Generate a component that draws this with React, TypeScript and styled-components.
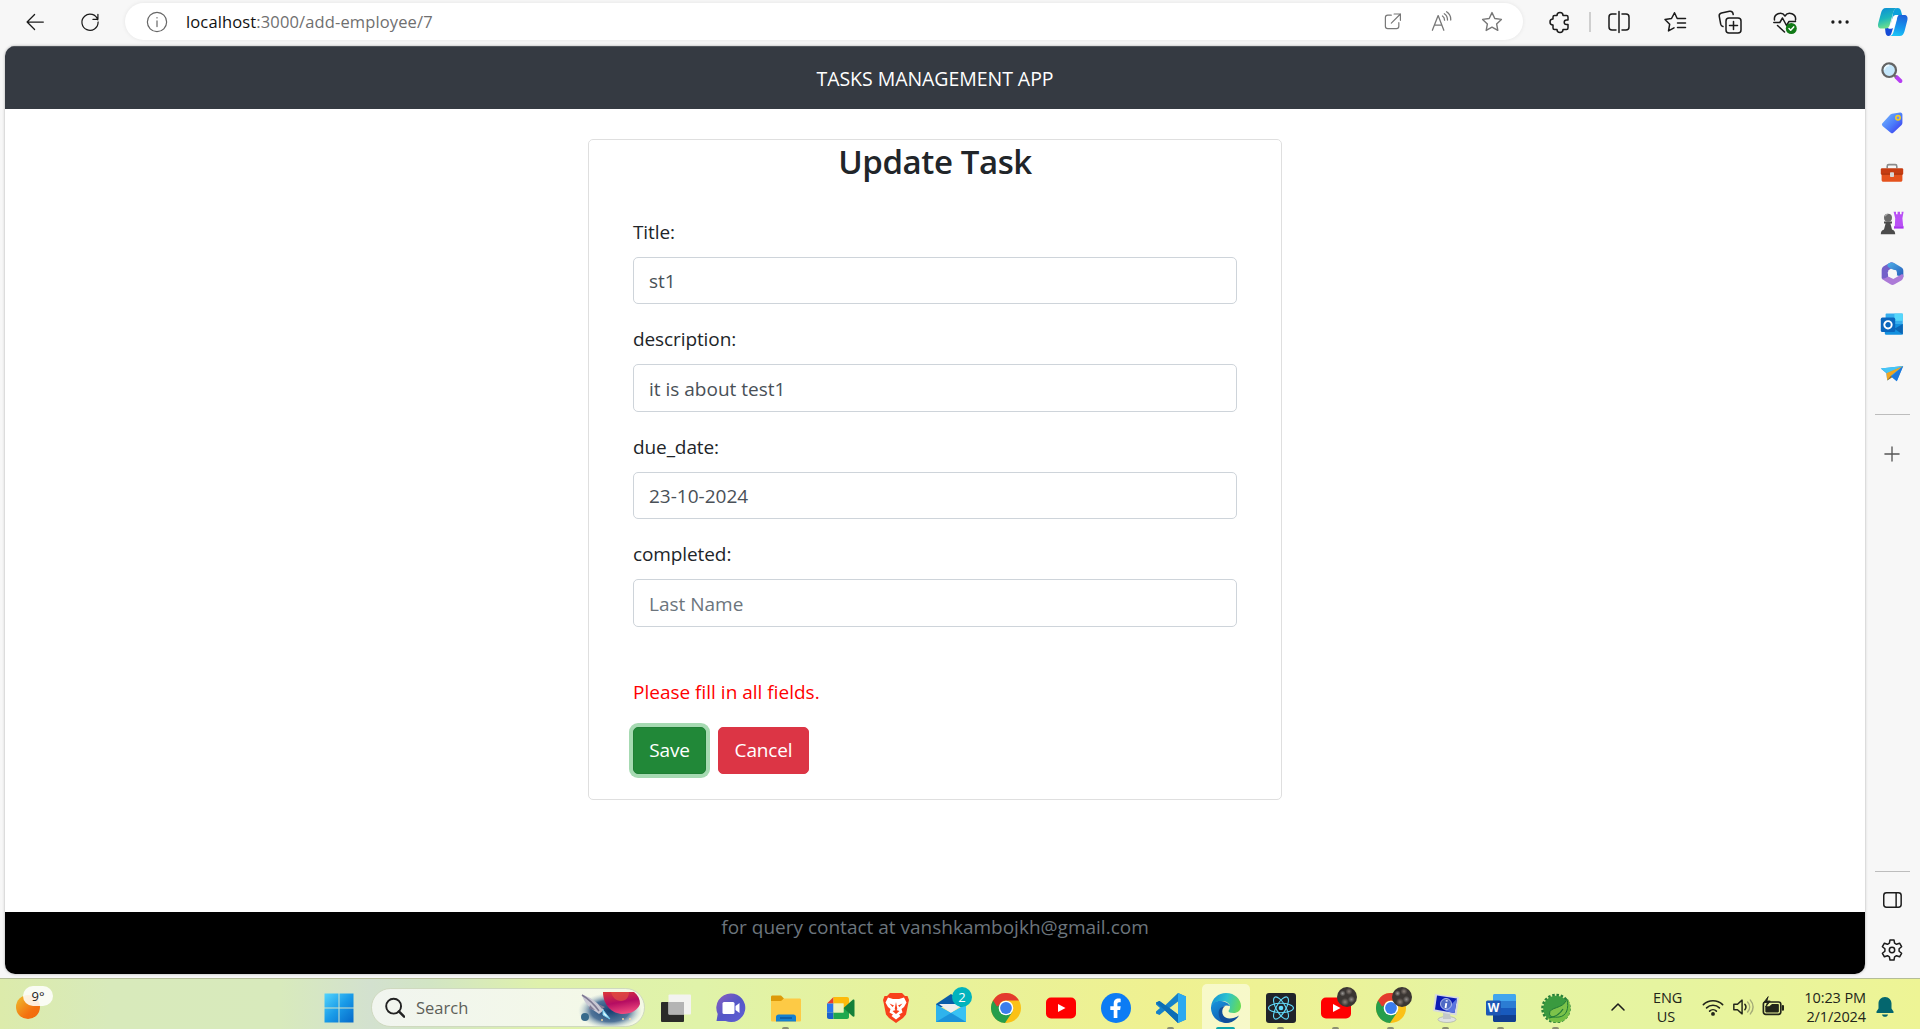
import React from "react";
import styled, { createGlobalStyle, css } from "styled-components";

const GlobalStyle = createGlobalStyle`
  *, *::before, *::after { box-sizing: border-box; }
  html, body { margin: 0; padding: 0; overflow: hidden; }
  body { font-family: "Open Sans", "Noto Sans", sans-serif; background: #f7f7f7; }
`;

/* ---------- shell ---------- */
const Screen = styled.div`
  width: 1920px;
  height: 1029px;
  display: flex;
  flex-direction: column;
  background: #f7f7f7;
  overflow: hidden;
`;
const Browser = styled.div`
  height: 978px;
  display: grid;
  grid-template-columns: 5px 1860px 55px;
  grid-template-rows: 46px 928px 4px;
`;
const Toolbar = styled.header`
  grid-column: 1 / 4;
  display: flex;
  align-items: flex-start;
  padding: 3px 0 0 25px;
`;
const ToolSlot = styled.div<{ $w: number; $pl?: number }>`
  width: ${(p) => p.$w}px;
  height: 37px;
  padding-left: ${(p) => p.$pl ?? 0}px;
  flex: none;
  display: flex;
  align-items: center;
  justify-content: center;
`;
const AddressBar = styled.div`
  width: 1398px;
  height: 37px;
  margin-left: 25px;
  border-radius: 19px;
  background: #fff;
  box-shadow: 0 0 4px rgba(0, 0, 0, 0.08);
  display: flex;
  align-items: center;
  padding: 0 6px 0 21px;
`;
const Url = styled.span`
  margin-left: 18px;
  flex: 1;
  font-size: 16.5px;
  line-height: 24px;
  letter-spacing: 0.13px;
  color: #6f6f6f;
  b { font-weight: 400; color: #111; }
`;
const Divider = styled.i`
  width: 2px;
  height: 20px;
  margin: 9px 0 0 -7px;
  background: #cfcfcf;
`;

/* ---------- page ---------- */
const Page = styled.main`
  grid-column: 2;
  grid-row: 2;
  background: #fff;
  border-radius: 10px;
  overflow: hidden;
  box-shadow: 0 0 3px rgba(0, 0, 0, 0.3);
  display: flex;
  flex-direction: column;
  align-items: center;
`;
const NavBar = styled.div`
  width: 100%;
  height: 63px;
  flex: none;
  background: #353a42;
  border-top: 1px solid #50555b;
  color: #fff;
  display: flex;
  align-items: center;
  justify-content: center;
  font-size: 19.5px;
  letter-spacing: -0.05px;
`;
const Card = styled.section`
  width: 694px;
  height: 661px;
  margin-top: 30px;
  flex: none;
  border: 1px solid #dfdfdf;
  border-radius: 5px;
  padding: 0 44px;
`;
const Heading = styled.h3`
  margin: 0 0 33.5px;
  text-align: center;
  font-size: 33px;
  font-weight: 600;
  line-height: 43px;
  letter-spacing: -0.4px;
  color: #212529;
`;
const Field = styled.div`
  height: 87.5px;
  margin-bottom: 20px;
  display: flex;
  flex-direction: column;
  justify-content: space-between;
`;
const Label = styled.label`
  font-size: 19px;
  line-height: 31px;
  letter-spacing: -0.1px;
  color: #212529;
`;
const Input = styled.input`
  height: 47.5px;
  width: 100%;
  border: 1px solid #ced4da;
  border-radius: 5px;
  padding: 2px 15px 0;
  font: 19px "Open Sans", "Noto Sans", sans-serif;
  letter-spacing: 0;
  color: #495057;
  outline: none;
  &::placeholder { color: #6c757d; opacity: 1; }
`;
const ErrorText = styled.p`
  margin: 50.5px 0 19.5px;
  font-size: 19px;
  line-height: 30px;
  letter-spacing: 0;
  color: #f00;
`;
const Actions = styled.div`
  display: flex;
  gap: 12px;
`;
const Button = styled.button<{ $kind: "save" | "cancel" }>`
  height: 47px;
  width: ${(p) => (p.$kind === "save" ? 73 : 91)}px;
  padding: 0;
  border-radius: 5px;
  font: 19px "Open Sans", "Noto Sans", sans-serif;
  letter-spacing: -0.15px;
  color: #fff;
  ${(p) =>
    p.$kind === "save"
      ? css`
          background: #218838;
          border: 1px solid #1e7e34;
          box-shadow: 0 0 0 4px #a6dab2;
        `
      : css`
          background: #dc3545;
          border: 1px solid #dc3545;
        `}
`;
const PageFooter = styled.footer`
  width: 100%;
  height: 62px;
  margin-top: auto;
  flex: none;
  background: #000;
  color: #6c757d;
  text-align: center;
  font-size: 19px;
  line-height: 31px;
`;

/* ---------- sidebar ---------- */
const SideBar = styled.aside`
  grid-column: 3;
  grid-row: 2 / 4;
  display: flex;
  flex-direction: column;
  align-items: center;
  padding: 2px 1px 0 0;
`;
const SideSlot = styled.div<{ $h?: number }>`
  height: ${(p) => p.$h ?? 50.1}px;
  flex: none;
  display: flex;
  align-items: center;
`;
const Rule = styled.hr`
  width: 35px;
  height: 1px;
  margin: 0;
  border: 0;
  background: #bdbdbd;
`;
const Spacer = styled.div`
  flex: 1;
`;

/* ---------- taskbar ---------- */
const TaskBar = styled.footer`
  height: 51px;
  display: flex;
  border-top: 1px solid #b4bd98;
  background: linear-gradient(90deg, #dcebab 0, #d8eabb 110px, #d8eabc 280px, #d3e1cf 370px, #d2e5c4 430px, #dff1ac 540px, #e0f3a9 700px, #e7f29c 900px, #eff191 1160px, #eef294 1260px, #e5f4a3 1480px, #e6f4a0 1660px, #eef495 1920px);
`;
const Weather = styled.div`
  width: 311px;
  padding: 16px 0 0 16px;
`;
const Sun = styled.div`
  position: relative;
  width: 24px;
  height: 24px;
  border-radius: 50%;
  background: linear-gradient(135deg, #eec02e, #f4700f 65%, #f0680e);
`;
const Degree = styled.span`
  position: absolute;
  left: 7px;
  top: -9px;
  width: 30px;
  height: 20px;
  border-radius: 10px;
  background: rgba(255, 255, 255, 0.86);
  color: #222;
  font-size: 13px;
  line-height: 20px;
  text-align: center;
`;
const SearchBox = styled.div`
  width: 274px;
  height: 39px;
  margin: 9px 3px 0 5px;
  border-radius: 20px;
  border: 1px solid #cfd9c0;
  background: linear-gradient(90deg, #f1f5ef, #f4f9e6);
  display: flex;
  align-items: center;
  padding-left: 12px;
  color: #5d6058;
  font-size: 16.5px;
`;
const SearchText = styled.span`
  margin-left: 11px;
  flex: 1;
`;
const TaskSlot = styled.div<{ $state?: "run" | "active" }>`
  position: relative;
  width: 55px;
  flex: none;
  display: flex;
  align-items: center;
  justify-content: center;
  padding-top: 7px;
  ${(p) =>
    p.$state === "active" &&
    css`
      &::before {
        content: "";
        position: absolute;
        left: 4px;
        top: 5px;
        width: 48px;
        height: 46px;
        border-radius: 5px 5px 0 0;
        background: rgba(255, 255, 245, 0.55);
      }
    `}
  ${(p) =>
    p.$state &&
    css`
      &::after {
        content: "";
        position: absolute;
        bottom: 0;
        left: ${p.$state === "active" ? 18 : 24}px;
        width: ${p.$state === "active" ? 19 : 7}px;
        height: 2px;
        border-radius: 2px 2px 0 0;
        background: ${p.$state === "active" ? "#0ba5ab" : "#8b8f70"};
      }
    `}
  svg { position: relative; display: block; }
`;
const Badge = styled.span`
  position: absolute;
  left: 29px;
  top: 8px;
  width: 20px;
  height: 20px;
  border-radius: 50%;
  background: #02b3bd;
  color: #fff;
  font-size: 13px;
  line-height: 20px;
  text-align: center;
`;
const Avatar = styled.span`
  position: absolute;
  left: 29px;
  top: 8px;
  width: 20px;
  height: 20px;
  border-radius: 50%;
  background: radial-gradient(circle at 28% 32%, #9b9895 0, transparent 3px),
    radial-gradient(circle at 60% 22%, #8a8078 0, transparent 3.5px),
    radial-gradient(circle at 72% 62%, #8e8a88 0, transparent 3.5px),
    radial-gradient(circle at 40% 75%, #8b8077 0, transparent 4px), #3b3633;
`;
const Tray = styled.div`
  display: flex;
  align-items: center;
  padding-top: 6px;
  flex: 1;
  color: #22251a;
`;
const TraySlot = styled.div<{ $w: number; $pl?: number }>`
  width: ${(p) => p.$w}px;
  padding-left: ${(p) => p.$pl ?? 0}px;
  flex: none;
  display: flex;
  gap: 8px;
  justify-content: center;
`;
const TrayText = styled.div<{ $w: number; $right?: boolean }>`
  width: ${(p) => p.$w}px;
  flex: none;
  font-size: 14.5px;
  line-height: 19px;
  padding-bottom: 1px;
  letter-spacing: -0.1px;
  white-space: nowrap;
  text-align: ${(p) => (p.$right ? "right" : "center")};
`;

/* ---------- icons ---------- */
type LineProps = { s?: number; c?: string; w?: number; children: React.ReactNode };
const Line = ({ s = 24, c = "#1b1b1b", w = 1.5, children }: LineProps) => (
  <svg width={s} height={s} viewBox="0 0 24 24" fill="none" stroke={c} strokeWidth={w} strokeLinecap="round" strokeLinejoin="round">
    {children}
  </svg>
);
const starPath = "M12 2.6 14.8 8.5 21.4 9.4 16.6 13.9 17.8 20.4 12 17.2 6.2 20.4 7.4 13.9 2.6 9.4 9.2 8.5Z";

const Art = ({ s = 30, children }: { s?: number; children: React.ReactNode }) => (
  <svg width={s} height={s} viewBox="0 0 30 30">{children}</svg>
);

const Copilot = () => (
  <svg width="32" height="32" viewBox="0 0 32 32">
    <defs>
      <linearGradient id="cpA" x1="0" y1="0" x2="0.3" y2="1"><stop offset="0" stopColor="#0c8bd8" /><stop offset=".55" stopColor="#1bb6bd" /><stop offset="1" stopColor="#6fe08a" /></linearGradient>
      <linearGradient id="cpB" x1="0.6" y1="0" x2="0.4" y2="1"><stop offset="0" stopColor="#1d62da" /><stop offset=".6" stopColor="#1598ee" /><stop offset="1" stopColor="#1bc4f6" /></linearGradient>
    </defs>
    <path d="M22 9h5c3 0 4 2 3.400 5l-2.800 11c-.8 3-2.200 5-5 5H12c3 0 4-2 4.800-5l3-11c.5-3 .9-5 2.200-5z" fill="url(#cpB)" />
    <path d="M8 22h8l-1.500 5c-.6 2-1.500 3-3 3-2 0-2.500-1.400-3-3.500z" fill="#154bd6" />
    <path d="M9 2h12c-3 0-4.200 2-5 5l-3 11c-.8 3-2 4.600-4.300 4.600H4.500c-3 0-4-2-3.300-5L4 7c.8-3 2-5 5-5z" fill="url(#cpA)" />
    <path d="M16 7c.8-3 2-5 4.600-5 2 0 2.900 1.200 3.400 3l1.100 4H20c-2.500 0-3.300 2-4 4l-2 6z" fill="#0ba0dc" />
    <path d="M19.500 9H22c-1.500 0-2 2-2.600 4.500l-1.800 6.300c-.7 2.200-2 2.900-3.600 2.900h-3c1.500-.6 2.100-2.300 2.600-4.200l1.600-5.600C15.900 10.300 17 9 19.500 9z" fill="#fff" />
  </svg>
);

const ChromeLogo = () => (
  <Art>
    <circle cx="15" cy="15" r="15" fill="#fbc116" />
    <path d="M2 7.500A15 15 0 0 0 14 30L21.500 18.700 15 15z" fill="#269e4b" />
    <path d="M2 7.500 8.600 18.700 15 15z" fill="#269e4b" />
    <path d="M2 7.500A15 15 0 0 1 28 7.500H15A7.500 7.500 0 0 0 8 12.500L6 13.500z" fill="#e33b2e" />
    <circle cx="15" cy="15" r="7.300" fill="#fff" />
    <circle cx="15" cy="15" r="5.900" fill="#3b7ded" />
  </Art>
);
const YouTube = () => (
  <Art>
    <rect y="4.500" width="30" height="21" rx="5" fill="#f00" />
    <path d="M12 11v8l7.500-4z" fill="#fff" />
  </Art>
);

const SearchTool = () => (
  <Art s={24}>
    <path d="M20.500 20l5 5" stroke="#b63df2" strokeWidth="5" strokeLinecap="round" />
    <path d="M17 17l3 3" stroke="#777" strokeWidth="3" />
    <circle cx="11.500" cy="11.500" r="8.500" fill="#c5e7fb" stroke="#646464" strokeWidth="2.800" />
    <path d="M5.500 11a6 6 0 0 1 6-5.500" stroke="#eefaff" strokeWidth="2" fill="none" />
  </Art>
);
const Tag = () => (
  <Art s={24}>
    <defs><linearGradient id="tg" x1="0" y1="0" x2="1" y2="1"><stop offset="0" stopColor="#79bdfd" /><stop offset=".55" stopColor="#4a7bfa" /><stop offset="1" stopColor="#3b2bea" /></linearGradient></defs>
    <path d="M15 3.500 25 2a2.500 2.500 0 0 1 3 3v10c0 1-.4 1.700-1 2.400L17 27c-1.300 1.300-2.600 1.300-4 0L3.500 19c-1.500-1.400-1.500-2.700-.2-4L13 4.500z" fill="url(#tg)" />
    <circle cx="22.500" cy="8.500" r="2.700" fill="#6a8aff" stroke="#f5ce22" strokeWidth="2" />
  </Art>
);
const Toolbox = () => (
  <Art s={24}>
    <path d="M9 9V6.500C9 5 10 4.500 11 4.500h8c1 0 2 .5 2 2V9" fill="none" stroke="#8b8b8b" strokeWidth="2" />
    <rect x="1" y="9" width="28" height="8" rx="1.500" fill="#c63c12" />
    <path d="M2 15h26v9c0 1-1 2-2 2H4c-1 0-2-1-2-2z" fill="#e5521d" />
    <path d="M2 15.500h26v1.500H2z" fill="#9c2c0b" />
    <rect x="12.500" y="14" width="5" height="6" rx="1" fill="#d7d7d7" />
  </Art>
);
const Chess = () => (
  <Art s={24}>
    <path d="M17 1h3v3h2V1h3v3h2V1h2.500L28 9l1 10.500H18.500L19 9z" fill="#b950f5" />
    <path d="M17.500 19h12v3h-12z" fill="#a832ee" />
    <circle cx="10" cy="8.500" r="5" fill="#6a6a6a" />
    <path d="M5 13h10v2.500h-2L15 23c3 1 4 3 4 6H1c0-3 1-5 4-6l2-7.500H5z" fill="#4b4b4b" />
    <path d="M6.500 6.500a4 4 0 0 1 3-2.500" stroke="#aaa" strokeWidth="1.500" fill="none" />
  </Art>
);
const M365 = () => (
  <Art s={25}>
    <defs><linearGradient id="ma" x1="0" y1="0" x2="1" y2="1"><stop offset="0" stopColor="#4fb0e8" /><stop offset="1" stopColor="#2459b8" /></linearGradient></defs>
    <path d="M12 2 5 6c-2 1.200-3 3-3 5v9c0 2 2.500 3 4.500 1.500L10 19v-8l9-5c-1-3-4-5.500-7-4z" fill="#7460c9" />
    <path d="M11 2.500c2-1 4-1 6 0l8.500 5C27.300 8.700 28 10 28 12v7.500L20 17v-4l-9-5C8 6.500 8.500 4 11 2.500z" fill="url(#ma)" />
    <path d="M28 18c0 2.500-.8 4.300-2.500 5.300L17.500 28c-1.700 1-3.500 1-5 0l-7-4.200C4 22.800 3 21.500 2.200 20c1.800 1.500 3.300 1.200 5 .2L10 18.500l6 3 9-5c1.700-1 3-.5 3 1.500z" fill="#ac7ad7" />
    <path d="M13 9.800 19.500 11l1 5.500-4.500 4-6-2-.8-5z" fill="#f7f7f7" />
  </Art>
);
const Outlook = () => (
  <Art s={24}>
    <path d="M8 2h19c1 0 1.500.5 1.500 1.500V16H7V3c0-.6.400-1 1-1z" fill="#36aeee" />
    <path d="M18 2h10.500v9H18z" fill="#55d7fb" />
    <path d="M6 15h22.500v12c0 1-.5 1.500-1.500 1.500H8c-1 0-2-.5-2-2z" fill="#1390df" />
    <path d="M28.500 15 18 21l10.500 7z" fill="#0b66b5" />
    <rect x="1" y="7" width="18" height="18" rx="2" fill="#0a66bd" />
    <circle cx="10" cy="16" r="4.600" fill="none" stroke="#fff" strokeWidth="2.400" />
  </Art>
);
const Plane = () => (
  <Art s={24}>
    <path d="M1 8 29 5 21 24 15 19 9 23 8 14z" fill="#2b9ce9" />
    <path d="M1 8 29 5 9 14z" fill="#45c5f6" />
    <path d="M29 5 8 14 9 23l5-6z" fill="#f0a521" />
    <path d="M14 17 9 23l6-4z" fill="#a96b0b" />
    <path d="M29 5 21 24l-7-6z" fill="#1e78dd" />
  </Art>
);

const Rocket = () => (
  <svg width="66" height="36" viewBox="0 0 66 36">
    <defs>
      <radialGradient id="sky"><stop offset="0" stopColor="#143f70" /><stop offset=".6" stopColor="#3e6590" stopOpacity=".9" /><stop offset="1" stopColor="#b4cad4" stopOpacity="0" /></radialGradient>
      <linearGradient id="planet" x1=".2" y1="0" x2=".5" y2="1"><stop offset="0" stopColor="#d8343c" /><stop offset=".5" stopColor="#b50d62" /><stop offset="1" stopColor="#f04b7e" /></linearGradient>
    </defs>
    <ellipse cx="32" cy="21" rx="32" ry="18" fill="url(#sky)" />
    <path d="M25 2h31c4 3 6 7 6 12-2 6-9 10-17 10C34 24 25 15 25 2z" fill="url(#planet)" />
    <path d="M33 2h18c0 5-3 9-8 9s-9-4-10-9z" fill="#e4523f" opacity=".65" />
    <path d="M4 5c7 1 15 7 22 15l-5 4C12 18 6 13 4 5z" fill="#c9c7d3" />
    <path d="M4 5c5 3 12 9 17 16" stroke="#7e7992" strokeWidth="1.500" fill="none" />
    <path d="M12 15l-1 4 6 1zM20 14l7 3-3 2z" fill="#817b96" />
    <path d="M25 20l7 9-7-4z" fill="#d7f5ff" stroke="#74cbee" />
    <circle cx="7" cy="27" r="4" fill="#386a8b" />
    <g fill="#f3d4a0"><circle cx="24" cy="30" r="1" /><circle cx="45" cy="29" r="1" /><circle cx="52" cy="29" r="1" /></g>
  </svg>
);

const Start = () => (
  <Art s={30}>
    <defs><linearGradient id="win" x1="0" y1="0" x2="1" y2="1"><stop offset="0" stopColor="#52d4fd" /><stop offset=".5" stopColor="#199be8" /><stop offset="1" stopColor="#0669c9" /></linearGradient></defs>
    <path d="M.5.500h14v14H.500zM15.500.500h14v14h-14zM.500 15.500h14v14H.500zM15.500 15.500h14v14h-14z" fill="url(#win)" />
  </Art>
);
const TaskView = () => (
  <Art>
    <rect x="0" y="9" width="23" height="20" rx="1" fill="#2b2b29" />
    <rect x="7.500" y="1.500" width="22.500" height="20" rx="1" fill="#f3f3f0" />
    <path d="M7.500 9H23v12.500H7.500z" fill="#b4b4b4" />
  </Art>
);
const Chat = () => (
  <Art>
    <defs><linearGradient id="ch" x1="0" y1="0" x2="1" y2="1"><stop offset="0" stopColor="#8c5fc0" /><stop offset=".5" stopColor="#5457c7" /><stop offset="1" stopColor="#615ed5" /></linearGradient></defs>
    <path d="M15 .500a14.300 14.300 0 1 1-5.500 27.500H.500l1.200-7A14.300 14.300 0 0 1 15 .500z" fill="url(#ch)" />
    <rect x="6.500" y="9" width="12" height="12" rx="1.500" fill="#fff" />
    <path d="M19.500 13 23.500 10v10l-4-3z" fill="#fff" />
  </Art>
);
const Folder = () => (
  <Art>
    <path d="M0 4c0-1 .5-1.500 1.500-1.500H10l3 3-3 4H0z" fill="#dd9a09" />
    <path d="M0 8h10l3-2.500h15.500c1 0 1.500.5 1.500 1.500v20c0 1-.5 1.500-1.500 1.500h-27C.5 28.500 0 28 0 27z" fill="#fdca45" />
    <path d="M5 28.500V24c0-1.500 1-2.500 2.500-2.500h15c1.500 0 2.500 1 2.500 2.500v4.500z" fill="#1480d0" />
    <path d="M9 25h12" stroke="#0c57a0" strokeWidth="1.600" />
  </Art>
);
const Meet = () => (
  <Art>
    <path d="M1 10.500 7.500 4v6.500z" fill="#e63c30" />
    <path d="M7.500 4H21c1.200 0 2 .8 2 2v9h-5.500v-4.500h-10z" fill="#fdba0b" />
    <path d="M1 10.500h6.500v9H1z" fill="#2b75ec" />
    <path d="M1 19.500h6.500V26H3c-1.200 0-2-.8-2-2z" fill="#1a62cb" />
    <path d="M7.500 19.500h10V15H23v9c0 1.200-.8 2-2 2H7.500z" fill="#20a84e" />
    <path d="M17.500 15 26.500 7c1-.8 2-.5 2 .8v14.700c0 1.300-1 1.600-2 .8z" fill="#138039" />
    <path d="M7.500 10.500h10v9h-10z" fill="#eef3bd" />
  </Art>
);
const Brave = () => (
  <Art>
    <path d="M9 0h12l3 3h2.500L28 7l-.7 3L25 21.500 22 25l-7 5-7-5-3-3.500L2.700 10 2 7l1.500-4H6z" fill="#f8401c" />
    <path d="M7 4.500 12 6h6l5-1.500 2.500 5L23 14l-2.500 2 1 3.500-3.500 2 1.500 1.500L15 26.500 10.500 23l1.500-1.500-3.500-2 1-3.500L7 14 4.500 9.500z" fill="#fff" />
    <path d="M8.500 10.500 13 12.500l-1.500 1.500zM21.500 10.500 17 12.500l1.500 1.500zM15 9l1.300 7-1.300 2-1.300-2zM11.500 18l3.500-1 3.500 1-3.500 3z" fill="#f8401c" />
  </Art>
);
const Mail = () => (
  <Art>
    <path d="M0 11 15 1l15 10v3H0z" fill="#0a5da9" />
    <path d="M3 11h24L15 20z" fill="#efefef" />
    <path d="M0 11.500 15 20l15-8.500V29H0z" fill="#2ba9e5" />
    <path d="M0 11.500 30 29H0z" fill="#2fb3ec" />
    <path d="M15 20 30 11.500V29z" fill="#38c2f4" />
    <path d="M0 29 15 20l15 9z" fill="#1b93da" />
  </Art>
);
const Facebook = () => (
  <Art>
    <circle cx="15" cy="15" r="15" fill="#0c7cf4" />
    <path d="M12.700 25v-8H9.300v-3.800h3.400v-2.400c0-3.800 1.900-5.300 4.800-5.300.9 0 1.500.1 2.200.2v3.500h-1.500c-1.300 0-1.800.7-1.800 1.900v2.100h3.300l-.6 3.800h-2.700v8z" fill="#fff" />
  </Art>
);
const VSCode = () => (
  <Art>
    <path d="M22 0 30 3.500v23L22 30 9 17.500 3.500 22 0 20.500v-2L4 15 0 11.500v-2L3.500 8 9 12.500z" fill="#1581c9" />
    <path d="M22 0 30 3.500v23L22 30z" fill="#2ba9f0" />
    <path d="M22 8.500v13L13.500 15z" fill="#eef192" />
    <path d="M0 9.500 3.500 8 13.500 15 22 21.500V30L9 17.500z" fill="#0c6eb5" />
  </Art>
);
const Edge = () => (
  <Art>
    <defs>
      <linearGradient id="ea" x1="0" y1=".3" x2="1" y2=".5"><stop offset="0" stopColor="#1593d5" /><stop offset=".5" stopColor="#2cc3cf" /><stop offset="1" stopColor="#67db54" /></linearGradient>
      <linearGradient id="eb" x1="0" y1="0" x2=".5" y2="1"><stop offset="0" stopColor="#1795dd" /><stop offset="1" stopColor="#1060b3" /></linearGradient>
    </defs>
    <path d="M0 14C1 5 7.500 0 15 0c9 0 15 6.500 15 13 0 4.500-3.500 7-7.500 7-3.500 0-5-1-5-2 0-.8 1.500-1.500 1.500-4C19 11 16 8 11 8 5 8 1 11 0 14z" fill="url(#ea)" />
    <path d="M0 14C1 10 5 7.500 10 8c4.500.3 8 3 9 5-6-2-10 1.500-10 6 0 5.500 4 9.500 10 10.300A15 15 0 0 1 0 14z" fill="url(#eb)" />
    <path d="M14 13c-5 4-3 12.500 4.500 12.500 4 0 7-1.500 9.500-3C25.500 27 20.500 30 15 30 8 29.500 6 19 9 15.500 10.500 14 12 13 14 13z" fill="#104f9b" />
  </Art>
);
const ReactLogo = () => (
  <Art>
    <rect width="30" height="30" rx="3" fill="#20232a" />
    <g fill="none" stroke="#61dafb" strokeWidth="1.100">
      <ellipse cx="15" cy="15" rx="12.500" ry="4.700" />
      <ellipse cx="15" cy="15" rx="12.500" ry="4.700" transform="rotate(60 15 15)" />
      <ellipse cx="15" cy="15" rx="12.500" ry="4.700" transform="rotate(120 15 15)" />
    </g>
    <circle cx="15" cy="15" r="2.300" fill="#61dafb" />
  </Art>
);
const Computer = () => (
  <Art>
    <ellipse cx="16" cy="26.500" rx="9" ry="3" fill="#dfe2e2" stroke="#a8aeaa" strokeWidth=".7" />
    <path d="M12 20h7l1 6h-8z" fill="#c3c8c8" />
    <path d="M4 1 28 4 25.500 22.500 2 18z" fill="#d5d9df" />
    <path d="M6 2.500 26 5.500 23.500 20 4 16.500z" fill="#0b1cb5" />
    <path d="M26 5.500 23.500 20 14 18z" fill="#5b76e0" />
    <circle cx="15" cy="11" r="5.500" fill="#4f6ac5" stroke="#c9d3f2" strokeWidth=".8" />
    <path d="M15.700 7.200v1.300M15.300 10.200 14.500 15" stroke="#fff" strokeWidth="1.900" />
  </Art>
);
const LogoLetter = styled.text`
  font: 700 12px "Open Sans", sans-serif;
  fill: #fff;
  text-anchor: middle;
`;
const Word = () => (
  <Art>
    <path d="M7 2.500C7 1.700 7.700 1 8.500 1h20c.8 0 1.500.7 1.500 1.500V8H7z" fill="#41a5ee" />
    <path d="M7 8h23v7H7z" fill="#2b7cd3" />
    <path d="M7 15h23v7H7z" fill="#185abd" />
    <path d="M7 22h23v5.500c0 .8-.7 1.500-1.500 1.500h-20c-.8 0-1.500-.7-1.500-1.500z" fill="#103f91" />
    <rect x="0" y="7.500" width="15" height="15" rx="1.500" fill="#1d57b5" />
    <LogoLetter x="7.500" y="19.300">W</LogoLetter>
  </Art>
);
const Spring = () => (
  <Art>
    <circle cx="15" cy="15.500" r="13.300" fill="none" stroke="#29803a" strokeWidth="3" strokeDasharray="2.500 1.680" />
    <circle cx="15" cy="15.500" r="12.800" fill="#3a9a3f" />
    <path d="M27 6c4 8 3 17-4 21.500-6 3.500-13 2-17-2.500C14 24 25 20 27 6z" fill="#73bf44" />
    <path d="M26 6c2 9 0 17-8 18-5 .5-9 0-9.500-3C8 13 22 17 26 6z" fill="#7cc24a" stroke="#217a38" />
    <path d="M8 25c6-1 11-4 14-9" stroke="#217a38" strokeWidth="1.200" fill="none" />
  </Art>
);

type TaskItem = { icon: React.ReactNode; state?: "run" | "active"; badge?: string; avatar?: boolean };
const tasks: TaskItem[] = [
  { icon: <TaskView /> },
  { icon: <Chat /> },
  { icon: <Folder />, state: "run" },
  { icon: <Meet /> },
  { icon: <Brave /> },
  { icon: <Mail />, badge: "2" },
  { icon: <ChromeLogo /> },
  { icon: <YouTube /> },
  { icon: <Facebook /> },
  { icon: <VSCode />, state: "run" },
  { icon: <Edge />, state: "active" },
  { icon: <ReactLogo />, state: "run" },
  { icon: <YouTube />, state: "run", avatar: true },
  { icon: <ChromeLogo />, state: "run", avatar: true },
  { icon: <Computer />, state: "run" },
  { icon: <Word />, state: "run" },
  { icon: <Spring />, state: "run" },
];

const fields = [
  { label: "Title:", value: "st1" },
  { label: "description:", value: "it is about test1" },
  { label: "due_date:", value: "23-10-2024" },
  { label: "completed:", value: "", placeholder: "Last Name" },
];

const sideIcons = [SearchTool, Tag, Toolbox, Chess, M365, Outlook, Plane];

export default function App() {
  return (
    <Screen>
      <GlobalStyle />
      <Browser>
        <Toolbar>
          <ToolSlot $w={20}>
            <Line><path d="M22 12H2.500M11.500 3 2.500 12l9 9" /></Line>
          </ToolSlot>
          <ToolSlot $w={55} $pl={35}>
            <Line><path d="M21.300 9.500A9.700 9.700 0 1 0 21.700 12M21.500 2.800v6h-6" /></Line>
          </ToolSlot>
          <AddressBar>
            <Line s={22} c="#666" w={1.3}><circle cx="12" cy="12" r="10.500" /><path d="M12 10.800V17M12 7.200v.3" /></Line>
            <Url><b>localhost</b>:3000/add-employee/7</Url>
            <ToolSlot $w={50}>
              <Line s={19} c="#777"><path d="M10.500 4H6a3 3 0 0 0-3 3v11a3 3 0 0 0 3 3h11a3 3 0 0 0 3-3v-4.500M14 2.500h8v8M22 2.500 10.500 14" /></Line>
            </ToolSlot>
            <ToolSlot $w={50}>
              <Line s={22} c="#777" w={1.4}><path d="M1.500 21 7.800 5 14 21M3.700 15.500h8.200M12.500 5.500c1.600 1 2.300 2.500 2.300 4.500M14.500 3c2.400 1.500 3.500 3.800 3.500 6.800M17 .800c3 2 4.800 5 4.500 9" /></Line>
            </ToolSlot>
            <ToolSlot $w={50}>
              <Line s={24} c="#777" w={1.4}><path d={starPath} /></Line>
            </ToolSlot>
          </AddressBar>
          <ToolSlot $w={73}>
            <Line s={24}><path d="M9 5.500a3 3 0 0 1 6 0h3.500c.8 0 1.500.7 1.500 1.500V10h-1.500a2.300 2.300 0 0 0 0 4.600H20V18c0 .8-.7 1.500-1.500 1.500H15a3 3 0 0 1-6 0H6.500C5.700 19.500 5 18.800 5 18v-3a3 3 0 0 1 0-6V7c0-.8.700-1.500 1.500-1.500z" /></Line>
          </ToolSlot>
          <Divider />
          <ToolSlot $w={56}>
            <Line><path d="M12 1.500v21M9 4H5a3 3 0 0 0-3 3v10a3 3 0 0 0 3 3h4M15 4h4a3 3 0 0 1 3 3v10a3 3 0 0 1-3 3h-4" /></Line>
          </ToolSlot>
          <ToolSlot $w={56}>
            <Line><path d="M15.500 8.500h-1.300L11.500 2.800 8.500 8.500 2 9.500l4.700 4.700-1.200 6.700 5.500-3M15.500 8.500h7M14.500 13h8M14.500 17.500h8" /></Line>
          </ToolSlot>
          <ToolSlot $w={54}>
            <Line><rect x="8" y="8" width="15" height="15" rx="3" /><path d="M15.500 11.500v8M11.500 15.500h8M5 16.500a3 3 0 0 1-2.300-2.300L1.300 6.500A3 3 0 0 1 3.500 3l8-1.700A3 3 0 0 1 15 3.500l.2 1" /></Line>
          </ToolSlot>
          <ToolSlot $w={56}>
            <Line>
              <path d="M1.500 10C.5 4 8.500.500 12 6c3.500-5.500 11.500-2 10.500 4M.800 12.500h6L9.500 8l4 7.500 2.500-4h6.500M4.500 15.500l7 6.500" />
              <circle cx="18.300" cy="18.500" r="5.500" fill="#127a17" stroke="none" /><path d="M16 18.500l1.700 1.700 3-3.300" stroke="#fff" />
            </Line>
          </ToolSlot>
          <ToolSlot $w={54}>
            <Line s={20}><g fill="#1b1b1b" stroke="none"><circle cx="3.500" cy="12" r="2" /><circle cx="12" cy="12" r="2" /><circle cx="20.500" cy="12" r="2" /></g></Line>
          </ToolSlot>
          <ToolSlot $w={52}><Copilot /></ToolSlot>
        </Toolbar>

        <Page>
          <NavBar>TASKS MANAGEMENT APP</NavBar>
          <Card>
            <Heading>Update Task</Heading>
            {fields.map((f) => (
              <Field key={f.label}>
                <Label>{f.label}</Label>
                <Input defaultValue={f.value} placeholder={f.placeholder} />
              </Field>
            ))}
            <ErrorText>Please fill in all fields.</ErrorText>
            <Actions>
              <Button $kind="save">Save</Button>
              <Button $kind="cancel">Cancel</Button>
            </Actions>
          </Card>
          <PageFooter>for query contact at vanshkambojkh@gmail.com</PageFooter>
        </Page>

        <SideBar>
          {sideIcons.map((Icon, i) => (
            <SideSlot key={i}><Icon /></SideSlot>
          ))}
          <SideSlot $h={32}><Rule /></SideSlot>
          <SideSlot $h={46}>
            <Line s={20} c="#555" w={1.6}><path d="M12 3.500v17M3.500 12h17" /></Line>
          </SideSlot>
          <Spacer />
          <Rule />
          <SideSlot $h={55}>
            <Line s={22} w={1.6}><rect x="3" y="4" width="19" height="16" rx="3" /><path d="M16.500 4v16" /></Line>
          </SideSlot>
          <SideSlot $h={46}>
            <Line s={24}>
              <path d="M10 2h4l.6 3.200 1.900 1.100 3.100-1.100 2 3.500-2.500 2.100v2.400l2.500 2.100-2 3.500-3.100-1.100-1.900 1.100L14 22h-4l-.6-3.200-1.900-1.100-3.100 1.100-2-3.500 2.500-2.100v-2.400L2.400 8.700l2-3.500 3.100 1.100 1.900-1.100z" />
              <circle cx="12" cy="12" r="2.700" />
            </Line>
          </SideSlot>
          <SideSlot $h={5} />
        </SideBar>
      </Browser>

      <TaskBar>
        <Weather><Sun><Degree>9°</Degree></Sun></Weather>
        <TaskSlot><Start /></TaskSlot>
        <SearchBox>
          <Line s={21} c="#222" w={2.2}><circle cx="11" cy="10.500" r="8.500" /><path d="M17 16.500 23 22.500" strokeWidth="2.800" /></Line>
          <SearchText>Search</SearchText>
          <Rocket />
        </SearchBox>
        {tasks.map((t, i) => (
          <TaskSlot key={i} $state={t.state}>
            {t.icon}
            {t.badge && <Badge>{t.badge}</Badge>}
            {t.avatar && <Avatar />}
          </TaskSlot>
        ))}
        <Tray>
          <TraySlot $w={70}>
            <Line s={16} w={2.3}><path d="M3 16.500 12 7.500l9 9" /></Line>
          </TraySlot>
          <TrayText $w={26}>ENG<br />US</TrayText>
          <TraySlot $w={120} $pl={8}>
            <Line s={22} c="#22251a" w={1.8}>
              <path d="M1.500 9.500a15 15 0 0 1 21 0M5 13a10 10 0 0 1 14 0M8.300 16.500a5.300 5.300 0 0 1 7.400 0" /><circle cx="12" cy="19.500" r="1.200" fill="#22251a" />
            </Line>
            <Line s={22} c="#22251a" w={1.6}>
              <path d="M2 9h4l5-4.500v15L6 15H2z" /><path d="M14 9c1.500 1.800 1.500 4.200 0 6" /><path d="M17 6.500c3 3.300 3 7.700 0 11M20 4.500c4 4.500 4 10.500 0 15" stroke="#a5ac78" />
            </Line>
            <Line s={22} c="#22251a" w={1.8}>
              <rect x="1.500" y="6.500" width="19" height="13.500" rx="2.500" /><path d="M4.500 17v-5h4l3-2.500h6V17z" fill="#22251a" /><path d="M22.800 11v4" strokeWidth="2.400" /><path d="M6.500 1 2 7h4l-2 5 5-6.500H5.500z" fill="#22251a" strokeWidth="1" />
            </Line>
          </TraySlot>
          <TrayText $w={67} $right>10:23 PM<br />2/1/2024</TrayText>
          <TraySlot $w={38}>
            <svg width="18" height="20" viewBox="0 0 18 20">
              <path d="M9 0c4 0 6.500 3 6.500 6.500v5l2 3v1.500H.500v-1.500l2-3v-5C2.500 3 5 0 9 0zM6 17.500h6c-.3 1.500-1.500 2.300-3 2.300s-2.700-.8-3-2.300z" fill="#04666e" />
            </svg>
          </TraySlot>
        </Tray>
      </TaskBar>
    </Screen>
  );
}
